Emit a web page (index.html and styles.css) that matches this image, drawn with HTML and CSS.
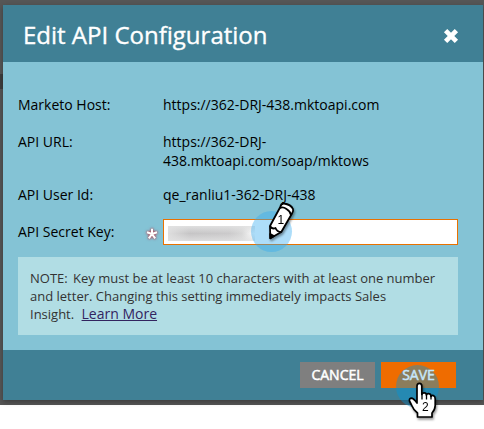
FILE: index.html
```html
<!DOCTYPE html>
<html lang="en">
<head>
<meta charset="utf-8">
<title>Edit API Configuration</title>
<link rel="stylesheet" href="styles.css">
</head>
<body>
<div class="backdrop">
  <section class="dialog">
    <header class="header">
      <h1 class="title">Edit API Configuration</h1>
      <svg class="close" width="16" height="16" viewBox="0 0 16 16"><path d="M2.600 2.600 13.400 13.400M13.400 2.600 2.600 13.400" stroke="#fff" stroke-width="4.700"/></svg>
    </header>
    <div class="content">
      <dl class="fields">
        <dt>Marketo Host:</dt><dd class="host">https://362-DRJ-438.mktoapi.com</dd>
        <dt>API URL:</dt><dd>https://362-DRJ-<br>438.mktoapi.com/soap/mktows</dd>
        <dt class="user">API User Id:</dt><dd class="user">qe_ranliu1-362-DRJ-438</dd>
      </dl>
      <div class="secret">
        <span class="label">API Secret Key:</span>
        <svg class="required" width="18" height="18" viewBox="0 0 18 18"><path d="M9 9V3.800M9 9l5-1.700M9 9l3.200 4.400M9 9l-3.200 4.400M9 9L4 7.300" stroke="#fff" stroke-width="2"/></svg>
        <div class="input"><span class="masked"></span></div>
      </div>
      <p class="note"><span class="lead">NOTE:</span> Key must be at least 10 characters with at least one number<br>and letter. Changing this setting immediately impacts Sales<br>Insight. <a class="learn">Learn More</a></p>
    </div>
    <footer class="footer">
      <span class="button cancel">CANCEL</span>
      <span class="button save"><span class="save-label">SAVE</span></span>
    </footer>
  </section>
</div>
<span class="halo halo-key"></span>
<span class="halo halo-save"></span>
<svg class="marker pencil" width="50" height="60" viewBox="247 196 50 60">
  <g stroke="#000" stroke-width="1.800" stroke-linejoin="round">
    <path d="M270.300 238.300 270 226 280.300 207Q281 203.300 284 203.500Q291 204.500 293 209Q293.700 211 292 213.500L281.300 232Z" fill="#fff"/>
    <path d="M270 226Q272 229.500 275.500 228Q277 232 281.300 232M279.700 208Q283 206.500 286.500 209Q290.500 211.500 291 215" fill="none"/>
    <path d="M270.300 238.300 270.200 234 274 236Z"/>
  </g>
  <text class="digit" x="277.500" y="224">1</text>
</svg>
<svg class="marker hand" width="50" height="64" viewBox="392 361 50 64">
  <path d="M417 401V386Q417 383.300 419.400 383.300Q421.800 383.300 421.800 386V394.500Q422.300 392.700 424.200 392.800Q426.400 392.900 426.400 395Q427 393.400 428.800 393.700Q431 394 431 396.500Q431.700 395.100 433.500 395.600Q435.200 396.200 435.200 399V405.500Q435 410 432 413V417H417.500V413Q413.500 410 411.500 405L409.500 401Q409 398.500 411.200 398.200Q413.500 398.300 417 403Z" fill="#fff" stroke="#000" stroke-width="1.700" stroke-linejoin="round"/>
  <path d="M422 394V399.500M426.500 395V399.500M431 396V399.500" stroke="#000" stroke-width="1.300"/>
  <text class="digit" x="422" y="411.300">2</text>
</svg>
</body>
</html>
```

FILE: styles.css
```css
* { box-sizing: border-box; }
body {
  margin: 0;
  width: 484px;
  height: 429px;
  overflow: hidden;
  background: #fff;
  color: #000;
  font: 14px/19px "Open Sans", sans-serif;
}
.backdrop {
  height: 405px;
  padding: 5px 1px 5px 3px;
  background: linear-gradient(#3e3e3e, #3e3e3e) 0 74px / 3px 15px no-repeat, #565656;
}
.dialog {
  width: 480px;
  height: 395px;
  background: #84c3d5;
  box-shadow: 0 2px 5px rgba(0, 0, 0, .3);
}
.header {
  display: flex;
  align-items: center;
  justify-content: space-between;
  height: 57px;
  padding: 0 24px 0 20px;
  background: #408095;
}
.title {
  margin: 2px 0 0;
  color: #fff;
  font-size: 24px;
  font-weight: 400;
  line-height: 32px;
  -webkit-text-stroke: .35px #fff;
  white-space: nowrap;
}
.close { margin-top: 5px; }
.content { height: 288px; padding: 33px 25px 0 15px; }
.fields {
  display: grid;
  grid-template-columns: 145px 1fr;
  row-gap: 17px;
  margin: 0;
  white-space: nowrap;
}
.fields dd { margin: 0; }
.fields .host { padding-bottom: 1px; }
.fields .user { margin-top: -2px; }
.secret { display: flex; height: 26px; margin-top: 15px; }
.label { width: 125px; padding-top: 3px; white-space: nowrap; }
.required {
  width: 18px;
  height: 18px;
  margin: 6px 2px 0 0;
  filter: drop-shadow(0 0 1px #b84150) drop-shadow(0 0 1px #b8415080);
}
.input {
  flex: 1;
  padding: 6px 4px;
  border: 1px solid #e97100;
  background: #fff;
}
.masked {
  display: block;
  width: 87px;
  height: 15px;
  background:
    linear-gradient(rgba(226, 226, 226, .9), rgba(226, 226, 226, 0) 50%, rgba(226, 226, 226, .8)),
    linear-gradient(90deg, #dedede, #c6c5c6 25%, #cbcacb 70%, #d8d8d8 85%, #fff);
}
.note {
  height: 78px;
  margin: 12px 0 0;
  padding: 12px;
  background: #b1dde4;
  color: #333;
  font-size: 13px;
  line-height: 18px;
  white-space: nowrap;
}
.lead { margin-right: 2px; }
.learn {
  margin-left: 4px;
  color: #32245f;
  font-size: 14px;
  line-height: 17px;
  text-decoration: underline;
}
.footer {
  display: flex;
  gap: 6px;
  justify-content: flex-end;
  height: 50px;
  padding: 12px 27px 12px 0;
  background: #408095;
}
.button {
  width: 75px;
  height: 26px;
  color: #fff;
  font-size: 14px;
  line-height: 26px;
  text-align: center;
  -webkit-text-stroke: .5px currentColor;
}
.cancel { background: #7f7f7f; }
.save { background: #ef6c00; color: #c6e6fa; }
.save-label { position: relative; z-index: 2; }
.halo { position: absolute; border-radius: 50%; }
.halo-key {
  left: 251px;
  top: 211px;
  width: 41px;
  height: 41px;
  background: rgba(50, 170, 240, .4);
}
.halo-save {
  left: 396px;
  top: 365px;
  width: 43px;
  height: 43px;
  background: rgba(0, 150, 220, .42);
}
.marker { position: absolute; z-index: 3; filter: drop-shadow(1px 2px 1px rgba(0, 0, 0, .4)); }
.pencil { left: 247px; top: 196px; }
.hand { left: 392px; top: 361px; }
.digit { font: 12px "Liberation Sans", sans-serif; }
```
